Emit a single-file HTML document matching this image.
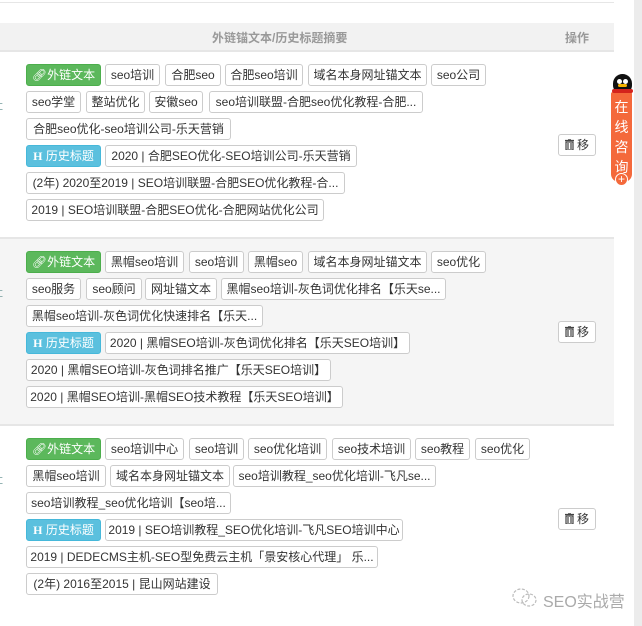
<!DOCTYPE html>
<html><head><meta charset="utf-8">
<style>
*{margin:0;padding:0;box-sizing:border-box}
html,body{width:642px;height:626px;overflow:hidden;background:#fff;font-family:"Liberation Sans","Noto Sans CJK SC",sans-serif;}
.t{position:absolute;height:22px;line-height:20px;border:1px solid #ccc;border-radius:3px;background:#fff;font-size:12px;color:#333;text-align:center;white-space:nowrap;overflow:hidden}
.g{background:#5cb85c;border-color:#4cae4c;color:#fff}
.b{background:#5bc0de;border-color:#46b8da;color:#fff}
.btn{position:absolute;left:558px;width:38px;height:22px;border:1px solid #ccc;border-radius:3px;background:#fff;font-size:12px;line-height:20px;text-align:center;color:#333}
.btn svg{vertical-align:-1px;margin-right:3px}
.hl{position:absolute;left:0;width:614px;height:2px;background:#e6e6e6}
.edge{position:absolute;left:-9px;font-size:12px;color:#8aa;}
</style></head><body>
<div class="hl" style="top:2px;height:1px"></div>
<div style="position:absolute;left:0;top:23px;width:614px;height:27px;background:#f2f2f2"></div>
<div style="position:absolute;left:212px;top:29px;font-size:12px;font-weight:bold;color:#999">外链锚文本/历史标题摘要</div>
<div style="position:absolute;left:565px;top:29px;font-size:12px;font-weight:bold;color:#999">操作</div>
<div class="hl" style="top:50px"></div>
<div style="position:absolute;left:0;top:238px;width:614px;height:187px;background:#f5f5f5"></div>
<div class="hl" style="top:237px"></div>
<div class="hl" style="top:424px"></div>
<div class="edge" style="top:96px">址</div>
<div class="edge" style="top:283px">址</div>
<div class="edge" style="top:470px">址</div>

<!-- row1 -->
<div class="t g" style="left:26px;width:75px;top:64px">&#x1F517;&#xFE0E;外链文本</div>
<div class="t" style="left:105px;width:55px;top:64px">seo培训</div>
<div class="t" style="left:165px;width:56px;top:64px">合肥seo</div>
<div class="t" style="left:225px;width:78px;top:64px">合肥seo培训</div>
<div class="t" style="left:308px;width:119px;top:64px">域名本身网址锚文本</div>
<div class="t" style="left:431px;width:55px;top:64px">seo公司</div>
<div class="t" style="left:26px;width:55px;top:91px">seo学堂</div>
<div class="t" style="left:86px;width:59px;top:91px">整站优化</div>
<div class="t" style="left:149px;width:54px;top:91px">安徽seo</div>
<div class="t" style="left:209px;width:214px;top:91px">seo培训联盟-合肥seo优化教程-合肥...</div>
<div class="t" style="left:26px;width:205px;top:118px">合肥seo优化-seo培训公司-乐天营销</div>
<div class="t b" style="left:26px;width:75px;top:145px"><b style="font-family:'Liberation Serif',serif">H</b> 历史标题</div>
<div class="t" style="left:105px;width:252px;top:145px">2020 | 合肥SEO优化-SEO培训公司-乐天营销</div>
<div class="t" style="left:26px;width:319px;top:172px">(2年) 2020至2019 | SEO培训联盟-合肥SEO优化教程-合...</div>
<div class="t" style="left:26px;width:298px;top:199px">2019 | SEO培训联盟-合肥SEO优化-合肥网站优化公司</div>
<div class="btn" style="top:134px"><svg width="9" height="11" viewBox="0 0 9 11"><path d="M0 1.5h9M3 0h3M1 3h7v8H1z M3 4v6M6 4v6" fill="none" stroke="#444" stroke-width="1.2"/></svg>移</div>

<!-- row2 -->
<div class="t g" style="left:26px;width:75px;top:251px">&#x1F517;&#xFE0E;外链文本</div>
<div class="t" style="left:105px;width:79px;top:251px">黑帽seo培训</div>
<div class="t" style="left:189px;width:55px;top:251px">seo培训</div>
<div class="t" style="left:248px;width:55px;top:251px">黑帽seo</div>
<div class="t" style="left:308px;width:119px;top:251px">域名本身网址锚文本</div>
<div class="t" style="left:431px;width:55px;top:251px">seo优化</div>
<div class="t" style="left:26px;width:55px;top:278px">seo服务</div>
<div class="t" style="left:86px;width:56px;top:278px">seo顾问</div>
<div class="t" style="left:145px;width:72px;top:278px">网址锚文本</div>
<div class="t" style="left:221px;width:225px;top:278px">黑帽seo培训-灰色词优化排名【乐天se...</div>
<div class="t" style="left:26px;width:237px;top:305px">黑帽seo培训-灰色词优化快速排名【乐天...</div>
<div class="t b" style="left:26px;width:75px;top:332px"><b style="font-family:'Liberation Serif',serif">H</b> 历史标题</div>
<div class="t" style="left:105px;width:305px;top:332px">2020 | 黑帽SEO培训-灰色词优化排名【乐天SEO培训】</div>
<div class="t" style="left:26px;width:305px;top:359px">2020 | 黑帽SEO培训-灰色词排名推广【乐天SEO培训】</div>
<div class="t" style="left:26px;width:317px;top:386px">2020 | 黑帽SEO培训-黑帽SEO技术教程【乐天SEO培训】</div>
<div class="btn" style="top:321px"><svg width="9" height="11" viewBox="0 0 9 11"><path d="M0 1.5h9M3 0h3M1 3h7v8H1z M3 4v6M6 4v6" fill="none" stroke="#444" stroke-width="1.2"/></svg>移</div>

<!-- row3 -->
<div class="t g" style="left:26px;width:75px;top:438px">&#x1F517;&#xFE0E;外链文本</div>
<div class="t" style="left:105px;width:79px;top:438px">seo培训中心</div>
<div class="t" style="left:189px;width:55px;top:438px">seo培训</div>
<div class="t" style="left:248px;width:79px;top:438px">seo优化培训</div>
<div class="t" style="left:332px;width:79px;top:438px">seo技术培训</div>
<div class="t" style="left:415px;width:55px;top:438px">seo教程</div>
<div class="t" style="left:475px;width:55px;top:438px">seo优化</div>
<div class="t" style="left:26px;width:80px;top:465px">黑帽seo培训</div>
<div class="t" style="left:110px;width:120px;top:465px">域名本身网址锚文本</div>
<div class="t" style="left:233px;width:203px;top:465px">seo培训教程_seo优化培训-飞凡se...</div>
<div class="t" style="left:26px;width:205px;top:492px">seo培训教程_seo优化培训【seo培...</div>
<div class="t b" style="left:26px;width:75px;top:519px"><b style="font-family:'Liberation Serif',serif">H</b> 历史标题</div>
<div class="t" style="left:105px;width:298px;top:519px">2019 | SEO培训教程_SEO优化培训-飞凡SEO培训中心</div>
<div class="t" style="left:26px;width:352px;top:546px">2019 | DEDECMS主机-SEO型免费云主机「景安核心代理」 乐...</div>
<div class="t" style="left:26px;width:192px;top:573px">(2年) 2016至2015 | 昆山网站建设</div>
<div class="btn" style="top:508px"><svg width="9" height="11" viewBox="0 0 9 11"><path d="M0 1.5h9M3 0h3M1 3h7v8H1z M3 4v6M6 4v6" fill="none" stroke="#444" stroke-width="1.2"/></svg>移</div>

<!-- scrollbar -->
<div style="position:absolute;left:634px;top:0;width:8px;height:626px;background:#ececec"></div>
<!-- consult widget -->
<div style="position:absolute;left:611px;top:92px;width:21px;height:90px;background:#f4693b;border-radius:2px 2px 8px 8px;color:#fff;font-size:14px;line-height:20px;text-align:center;padding-top:5px">在<br>线<br>咨<br>询</div>
<div style="position:absolute;left:613px;top:74px;width:19px;height:19px;border-radius:50% 50% 40% 40%;background:#111"></div>
<div style="position:absolute;left:617px;top:79px;width:5px;height:5px;border-radius:50%;background:#fff"></div>
<div style="position:absolute;left:623px;top:79px;width:5px;height:5px;border-radius:50%;background:#fff"></div>
<div style="position:absolute;left:618px;top:84px;width:9px;height:3px;border-radius:2px;background:#f5b400"></div>
<div style="position:absolute;left:612px;top:89px;width:21px;height:4px;background:#d4231c;border-radius:2px"></div>
<div style="position:absolute;left:615px;top:173px;width:13px;height:13px;border-radius:50%;border:1.5px solid #fff;background:#f4693b;color:#fff;font-size:12px;line-height:10px;text-align:center">+</div>

<!-- watermark -->
<svg style="position:absolute;left:511px;top:587px" width="28" height="22" viewBox="0 0 28 22"><g fill="none" stroke="#bbb" stroke-width="1.2" stroke-dasharray="3 1.5"><ellipse cx="10" cy="9" rx="8" ry="7"/><ellipse cx="18" cy="13" rx="7" ry="6"/></g></svg>
<div style="position:absolute;left:543px;top:588px;font-size:16px;color:#aaa">SEO实战营</div>
</body></html>
